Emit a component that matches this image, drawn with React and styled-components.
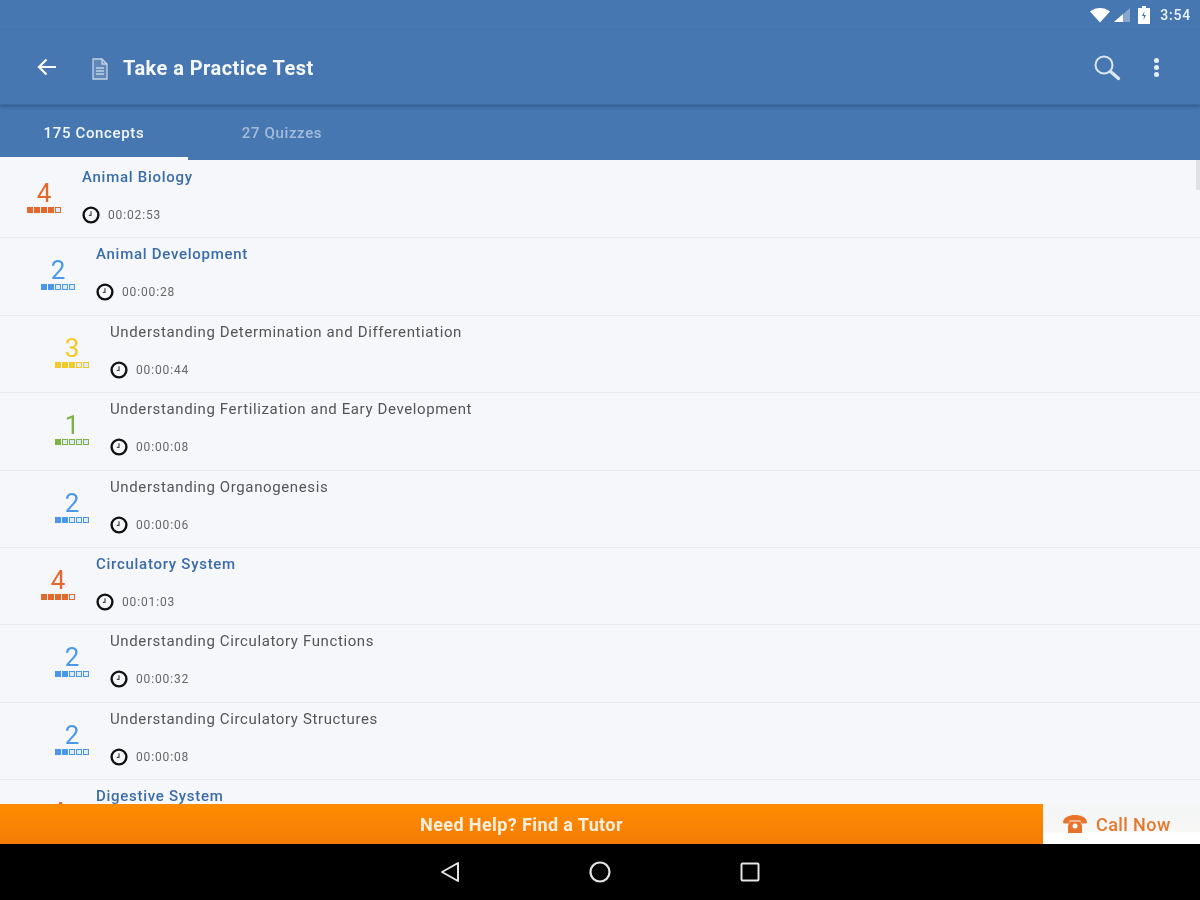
import React from "react";
import styled, { createGlobalStyle } from "styled-components";

const rows = [
  { depth: 0, score: 4, title: "Animal Biology", time: "00:02:53", group: true },
  { depth: 1, score: 2, title: "Animal Development", time: "00:00:28", group: true },
  { depth: 2, score: 3, title: "Understanding Determination and Differentiation", time: "00:00:44" },
  { depth: 2, score: 1, title: "Understanding Fertilization and Eary Development", time: "00:00:08" },
  { depth: 2, score: 2, title: "Understanding Organogenesis", time: "00:00:06" },
  { depth: 1, score: 4, title: "Circulatory System", time: "00:01:03", group: true },
  { depth: 2, score: 2, title: "Understanding Circulatory Functions", time: "00:00:32" },
  { depth: 2, score: 2, title: "Understanding Circulatory Structures", time: "00:00:08" },
  { depth: 1, score: 4, title: "Digestive System", time: "00:00:40", group: true },
];

const scoreColors = {
  1: "#7cb342",
  2: "#4a98ec",
  3: "#f2c926",
  4: "#e4682c",
};

const Clock = () => (
  <svg width="18" height="18" viewBox="0 0 18 18" fill="none">
    <circle cx="9" cy="9" r="7.400" stroke="#111" strokeWidth="2.400" />
    <path d="M9 5.200v4.200H6.800" stroke="#444" strokeWidth="1.200" />
  </svg>
);

const Row = ({ depth, score, title, time, group }) => (
  <RowWrap $depth={depth}>
    <Score>
      <Digit $color={scoreColors[score]}>{score}</Digit>
      <Strip>
        {[0, 1, 2, 3, 4].map((i) => (
          <Pip key={i} $color={scoreColors[score]} $on={i < score} />
        ))}
      </Strip>
    </Score>
    <Details>
      <Title $group={group}>{title}</Title>
      <Meta>
        <Clock />
        <Time>{time}</Time>
      </Meta>
    </Details>
  </RowWrap>
);

const App = () => {
  return (
    <Screen>
      <GlobalStyle />
      <Header>
        <StatusBar>
          <svg width="22" height="16" viewBox="0 0 22 16">
            <path d="M1 4.500C4 2 7.500 1 11 1s7 1 10 3.500L11 15.500z" fill="#fff" />
          </svg>
          <svg width="18" height="16" viewBox="0 0 18 16">
            <path d="M1 15L17 1v14z" fill="#fff" fillOpacity=".35" />
            <path d="M1 15L10 7.100V15z" fill="#fff" />
          </svg>
          <BatterySlot>
            <svg width="12" height="18" viewBox="0 0 12 18">
              <path d="M4 0h4v2h4v16H0V2h4z" fill="#fff" />
              <path d="M6.500 5L4 10h2l-.5 4L8 9H6z" fill="#4677b0" />
            </svg>
          </BatterySlot>
          <Clocktext>3:54</Clocktext>
        </StatusBar>
        <Toolbar>
          <IconSlot>
            <svg width="20" height="18" viewBox="0 0 20 18" fill="none" stroke="#fff" strokeWidth="2.200">
              <path d="M19 9H2M9.500 1.500L2 9l7.500 7.500" />
            </svg>
          </IconSlot>
          <DocSlot>
            <svg width="16" height="22" viewBox="0 0 16 22" fill="#c3d2e4" fillOpacity=".2" stroke="#c3d2e4" strokeWidth="1.300">
              <path d="M1 1h9l5 5v15H1z" />
              <path d="M10 1v5h5M4 10h8M4 13h8M4 16h8" />
            </svg>
          </DocSlot>
          <PageTitle>Take a Practice Test</PageTitle>
          <Actions>
            <svg width="28" height="27" viewBox="0 0 28 27" fill="none" stroke="#dce6f1">
              <circle cx="11" cy="11" r="8.500" strokeWidth="2" />
              <path d="M17.500 17.500l8 7" strokeWidth="3.400" strokeLinecap="round" />
            </svg>
            <Dots>
              <Dot />
              <Dot />
              <Dot />
            </Dots>
          </Actions>
        </Toolbar>
        <Tabs>
          <Tab $active>175 Concepts</Tab>
          <Tab>27 Quizzes</Tab>
        </Tabs>
      </Header>

      <List>
        {rows.map((row) => (
          <Row key={row.title} {...row} />
        ))}
        <ScrollThumb />
      </List>

      <HelpBar>
        <HelpText>Need Help? Find a Tutor</HelpText>
        <CallButton>
          <svg width="26" height="18" viewBox="0 0 26 18" fill="#e8732a">
            <path d="M1 7C2 2 7 0 13 0s11 2 12 7c0 1-1 1.500-2 1.500h-3c-1 0-1.500-.5-1.500-1.500V5.500h-11V7c0 1-.5 1.500-1.500 1.500H3C2 8.500 1 8 1 7z" />
            <path d="M8 6.500h10l2 4V18H6v-7.500z" />
            <circle cx="13" cy="11" r="2.500" fill="#fff" />
          </svg>
          <CallText>Call Now</CallText>
        </CallButton>
      </HelpBar>

      <NavBar>
        <NavIcon>
          <svg width="24" height="24" viewBox="0 0 24 24" fill="none" stroke="#e4e4e4" strokeWidth="2" strokeLinejoin="round">
            <path d="M20 3v18L4 12z" />
          </svg>
        </NavIcon>
        <NavIcon>
          <svg width="24" height="24" viewBox="0 0 24 24" fill="none" stroke="#e4e4e4" strokeWidth="2.200">
            <circle cx="12" cy="12" r="9.500" />
          </svg>
        </NavIcon>
        <NavIcon>
          <svg width="24" height="24" viewBox="0 0 24 24" fill="none" stroke="#e4e4e4" strokeWidth="2">
            <rect x="3.500" y="3.500" width="17" height="17" rx="1" />
          </svg>
        </NavIcon>
      </NavBar>
    </Screen>
  );
};

export default App;

const GlobalStyle = createGlobalStyle`
  * {
    box-sizing: border-box;
  }

  body {
    margin: 0;
    background: #000;
    font-family: Roboto, "Liberation Sans", sans-serif;
  }
`;

const Screen = styled.div`
  width: 1200px;
  height: 900px;
  display: flex;
  flex-direction: column;
  overflow: hidden;
  background: #f5f7fb;
  /* the reference is a soft, upscaled capture */
  filter: blur(0.45px);
`;

const Header = styled.header`
  flex: none;
  height: 160px;
  display: flex;
  flex-direction: column;
  background: #4677b0;
`;

const StatusBar = styled.div`
  height: 30px;
  padding-right: 9px;
  display: flex;
  justify-content: flex-end;
  align-items: center;
  gap: 2px;
`;

const BatterySlot = styled.div`
  margin: 0 8px 0 5px;
  display: flex;
`;

const Clocktext = styled.span`
  font-size: 14px;
  font-weight: 500;
  letter-spacing: 0.8px;
  color: #eef3f9;
`;

const Toolbar = styled.div`
  height: 75px;
  padding: 0 41px 0 37px;
  display: flex;
  align-items: center;
  border-bottom: 1px solid #3f6da3;
  box-shadow: 0 2px 3px rgba(40, 75, 120, 0.55);
`;

const IconSlot = styled.div`
  width: 55px;
  display: flex;
`;

const DocSlot = styled.div`
  width: 31px;
  display: flex;
  padding-top: 3px;
`;

const PageTitle = styled.h1`
  margin: 0;
  padding-top: 2px;
  font-size: 20px;
  font-weight: 700;
  letter-spacing: 0.45px;
  color: #f4f7fb;
`;

const Actions = styled.div`
  margin-left: auto;
  display: flex;
  align-items: center;
  gap: 33px;
`;

const Dots = styled.div`
  width: 5px;
  display: flex;
  flex-direction: column;
  gap: 2px;
`;

const Dot = styled.span`
  width: 5px;
  height: 5px;
  border-radius: 50%;
  background: #e6edf5;
`;

const Tabs = styled.nav`
  flex: 1;
  display: flex;
`;

const Tab = styled.div`
  width: 188px;
  display: flex;
  justify-content: center;
  align-items: center;
  padding-top: 4px;
  font-size: 15px;
  font-weight: 500;
  letter-spacing: 0.65px;
  color: ${(props) => (props.$active ? "#f2f5fa" : "rgba(255, 255, 255, 0.5)")};
  border-bottom: 3px solid ${(props) => (props.$active ? "#f5f7fb" : "transparent")};
`;

const List = styled.main`
  position: relative;
  flex: 1;
  min-height: 0;
  padding-top: 1px;
  overflow: hidden;
`;

const RowWrap = styled.div`
  height: 77.4px;
  padding-left: ${(props) => 26 + props.$depth * 14}px;
  display: flex;
  border-bottom: 1px solid #e9ebef;
`;

const Score = styled.div`
  width: 36px;
  padding-top: 19px;
  display: flex;
  flex-direction: column;
  align-items: center;
`;

const Digit = styled.div`
  height: 26px;
  font-size: 26px;
  font-weight: 400;
  line-height: 26px;
  color: ${(props) => props.$color};
`;

const Strip = styled.div`
  margin-top: 1px;
  display: flex;
  gap: 1px;
`;

const Pip = styled.span`
  width: 6px;
  height: 6px;
  background: ${(props) => (props.$on ? props.$color : "#dfeafa")};
  border: 1px solid ${(props) => props.$color};
`;

const Details = styled.div`
  margin-left: 20px;
  padding-top: 6px;
  display: flex;
  flex-direction: column;
  gap: 18px;
`;

const Title = styled.div`
  height: 20px;
  font-size: 15px;
  line-height: 20px;
  letter-spacing: ${(props) => (props.$group ? "0.72px" : "0.62px")};
  font-weight: ${(props) => (props.$group ? 500 : 400)};
  color: ${(props) => (props.$group ? "#3a6cab" : "#555")};
`;

const Meta = styled.div`
  height: 20px;
  display: flex;
  align-items: center;
  gap: 8px;
`;

const Time = styled.span`
  font-size: 12px;
  letter-spacing: 0.85px;
  color: #666;
`;

const ScrollThumb = styled.div`
  position: absolute;
  top: 0;
  right: 0;
  width: 4px;
  height: 30px;
  background: #dfe1e5;
`;

const HelpBar = styled.div`
  flex: none;
  height: 40px;
  display: flex;
`;

const HelpText = styled.div`
  width: 1043px;
  display: flex;
  justify-content: center;
  align-items: center;
  font-size: 18px;
  font-weight: 700;
  letter-spacing: 0.4px;
  color: #fbefe0;
  background: linear-gradient(#ff8c00, #f47c06);
`;

const CallButton = styled.div`
  flex: 1;
  padding-left: 19px;
  display: flex;
  align-items: center;
  gap: 8px;
  background: linear-gradient(#f4f5f6, #f7f7f6 70%, #fff 72%);
`;

const CallText = styled.span`
  font-size: 18px;
  font-weight: 500;
  letter-spacing: 0.4px;
  color: #e8762c;
`;

const NavBar = styled.div`
  flex: none;
  height: 56px;
  display: flex;
  justify-content: center;
  align-items: center;
  gap: 126px;
  background: #000;
`;

const NavIcon = styled.div`
  width: 24px;
  height: 24px;
  display: flex;
`;
